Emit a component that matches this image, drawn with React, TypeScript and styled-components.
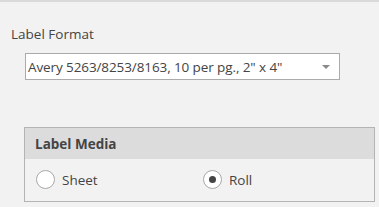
import React from 'react';
import { styled, createGlobalStyle } from 'styled-components';

const GlobalStyle = createGlobalStyle`
  html, body {
    margin: 0;
    padding: 0;
    background: #f2f2f2;
  }
  body {
    font-family: 'Open Sans', 'Noto Sans', sans-serif;
    color: #444444;
  }
`;

const mediaOptions = [
  { label: 'Sheet', checked: false },
  { label: 'Roll', checked: true },
];

const App: React.FC = () => {
  return (
    <>
      <GlobalStyle />
      <StPage>
        <StTopBar />
        <StContent>
          <StFieldLabel>Label Format</StFieldLabel>
          <StSelect>
            <StSelectText>Avery 5263/8253/8163, 10 per pg., 2" x 4"</StSelectText>
            <StArrow />
          </StSelect>
          <StGroup>
            <StGroupHeader>Label Media</StGroupHeader>
            <StRadioRow>
              {mediaOptions.map((opt) => (
                <StRadioItem key={opt.label}>
                  <StRadioCircle $checked={opt.checked} />
                  <span>{opt.label}</span>
                </StRadioItem>
              ))}
            </StRadioRow>
          </StGroup>
        </StContent>
      </StPage>
    </>
  );
};

export default App;

const StPage = styled.div`
  width: 379px;
  height: 207px;
  background: #f2f2f2;
  overflow: hidden;
`;

const StTopBar = styled.div`
  height: 2px;
  background: #dadada;
`;

const StContent = styled.div`
  display: flex;
  flex-direction: column;
  padding: 22px 5px 0 11px;
`;

const StFieldLabel = styled.div`
  font-size: 13.5px;
  line-height: 20px;
  color: #444444;
`;

const StSelect = styled.div`
  display: flex;
  align-items: center;
  justify-content: space-between;
  box-sizing: border-box;
  width: 315px;
  height: 27px;
  margin: 9px 0 0 14px;
  padding: 0 9px 0 2px;
  background: #ffffff;
  border: 1px solid #ababab;
  font-size: 13.5px;
  color: #444444;
`;

const StSelectText = styled.span`
  white-space: nowrap;
  letter-spacing: -0.1px;
`;

const StArrow = styled.span`
  width: 0;
  height: 0;
  border-left: 4px solid transparent;
  border-right: 4px solid transparent;
  border-top: 4px solid #8a8a8a;
`;

const StGroup = styled.div`
  box-sizing: border-box;
  width: 351px;
  height: 75px;
  margin: 47px 0 0 13px;
  border: 1px solid #b4b4b4;
  display: flex;
  flex-direction: column;
`;

const StGroupHeader = styled.div`
  height: 31px;
  display: flex;
  align-items: center;
  padding-left: 10px;
  background: #dcdcdc;
  font-size: 13.5px;
  font-weight: 700;
  color: #444444;
`;

const StRadioRow = styled.div`
  display: grid;
  grid-template-columns: 167px 1fr;
  align-items: center;
  padding: 11px 0 0 11px;
`;

const StRadioItem = styled.label`
  display: flex;
  align-items: center;
  gap: 7px;
  font-size: 13.5px;
  color: #444444;
`;

const StRadioCircle = styled.span<{ $checked: boolean }>`
  box-sizing: border-box;
  width: 19px;
  height: 19px;
  border-radius: 50%;
  border: 1px solid #a8a8a8;
  background: #ffffff;
  display: flex;
  align-items: center;
  justify-content: center;
  &::after {
    content: '';
    display: ${({ $checked }) => ($checked ? 'block' : 'none')};
    width: 7px;
    height: 7px;
    border-radius: 50%;
    background: #444444;
  }
`;
